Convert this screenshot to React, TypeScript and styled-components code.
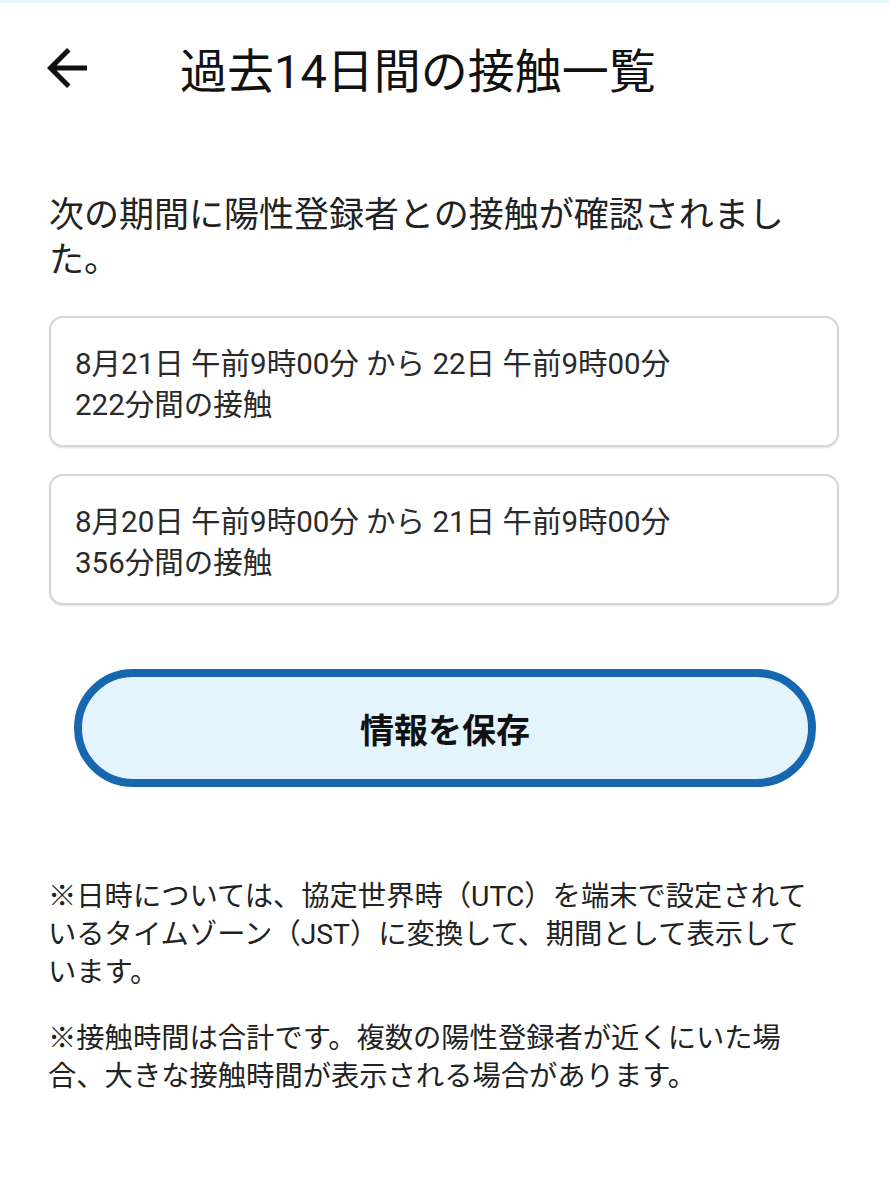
import React from "react";
import styled, { createGlobalStyle } from "styled-components";

const GlobalStyle = createGlobalStyle`
  html, body {
    margin: 0;
    padding: 0;
    background: #ffffff;
  }
  body {
    font-family: Roboto, "Noto Sans CJK JP", "Noto Sans", sans-serif;
    color: #222222;
  }
`;

const Screen = styled.div`
  width: 889px;
  min-height: 1200px;
  box-sizing: border-box;
  border-top: 3px solid #e3f6f9;
  background: #ffffff;
`;

const Header = styled.header`
  height: 130px;
  display: flex;
  align-items: center;
  padding-left: 37px;
`;

const BackButton = styled.button`
  width: 60px;
  height: 60px;
  padding: 0;
  border: none;
  background: transparent;
  display: flex;
  align-items: center;
  justify-content: center;
  cursor: pointer;
  svg {
    display: block;
  }
`;

const Title = styled.h1`
  margin: 8px 0 0 83px;
  font-size: 47px;
  font-weight: 400;
  letter-spacing: 0;
  color: #111111;
  line-height: 1.2;
`;

const Main = styled.main`
  padding: 0 50px 0 49px;
  display: flex;
  flex-direction: column;
`;

const Lead = styled.p`
  margin: 60px 0 0 0;
  font-size: 35px;
  line-height: 45px;
  color: #222222;
`;

const CardList = styled.div`
  margin-top: 33px;
  display: flex;
  flex-direction: column;
  gap: 27px;
`;

const Card = styled.div`
  border: 2px solid #d6d6d6;
  border-radius: 14px;
  padding: 26px 24px 19px 24px;
  box-shadow: 0 1px 2px rgba(0, 0, 0, 0.12);
  background: #ffffff;
`;

const CardLine = styled.div`
  font-size: 29.5px;
  line-height: 41px;
  color: #2a2a2a;
  white-space: nowrap;
`;

const SaveButton = styled.button`
  margin: 64px 23px 0 25px;
  height: 118px;
  box-sizing: border-box;
  border: 8px solid #1767b0;
  border-radius: 59px;
  background: #e4f4fd;
  font-family: Roboto, "Noto Sans CJK JP", sans-serif;
  font-size: 34px;
  font-weight: 700;
  color: #111111;
  display: flex;
  align-items: center;
  justify-content: center;
  cursor: pointer;
`;

const Notes = styled.div`
  margin-top: 91px;
  display: flex;
  flex-direction: column;
  gap: 28px;
`;

const Note = styled.p`
  margin: 0 0 0 -1px;
  font-size: 28.3px;
  line-height: 38px;
  color: #222222;
  white-space: nowrap;
`;

const BackArrow = () => (
  <svg width="60" height="60" viewBox="0 0 24 24" aria-hidden="true">
    <path
      d="M20 11H7.83l5.59-5.59L12 4l-8 8 8 8 1.41-1.41L7.83 13H20v-2z"
      fill="#111111"
    />
  </svg>
);

const contacts = [
  {
    period: "8月21日 午前9時00分 から 22日 午前9時00分",
    duration: "222分間の接触",
  },
  {
    period: "8月20日 午前9時00分 から 21日 午前9時00分",
    duration: "356分間の接触",
  },
];

export default function App() {
  return (
    <>
      <GlobalStyle />
      <Screen>
        <Header>
          <BackButton aria-label="戻る">
            <BackArrow />
          </BackButton>
          <Title>過去14日間の接触一覧</Title>
        </Header>
        <Main>
          <Lead>次の期間に陽性登録者との接触が確認されました。</Lead>
          <CardList>
            {contacts.map((c) => (
              <Card key={c.period}>
                <CardLine>{c.period}</CardLine>
                <CardLine>{c.duration}</CardLine>
              </Card>
            ))}
          </CardList>
          <SaveButton>情報を保存</SaveButton>
          <Notes>
            <Note>
              ※日時については、協定世界時（UTC）を端末で設定されて
              <br />
              いるタイムゾーン（JST）に変換して、期間として表示して
              <br />
              います。
            </Note>
            <Note>
              ※接触時間は合計です。複数の陽性登録者が近くにいた場
              <br />
              合、大きな接触時間が表示される場合があります。
            </Note>
          </Notes>
        </Main>
      </Screen>
    </>
  );
}
